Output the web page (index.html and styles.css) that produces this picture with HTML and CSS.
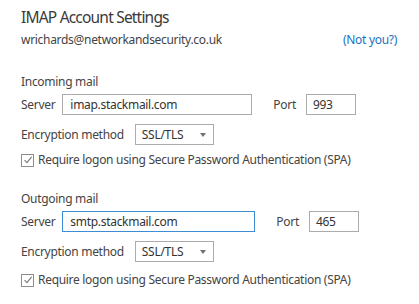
FILE: index.html
```html
<!DOCTYPE html>
<html>
<head>
<meta charset="utf-8">
<link rel="stylesheet" href="styles.css">
</head>
<body>
<div class="page">
  <h1 class="title">IMAP Account Settings</h1>
  <div class="account">
    <span class="email">wrichards@networkandsecurity.co.uk</span>
    <a class="notyou" href="#">(Not you?)</a>
  </div>

  <section class="group group-in">
    <div class="heading">Incoming mail</div>
    <div class="row">
      <span class="label">Server</span>
      <span class="field server">imap.stackmail.com</span>
      <span class="label port-label">Port</span>
      <span class="field port">993</span>
    </div>
    <div class="row enc">
      <span class="label">Encryption method</span>
      <span class="select">SSL/TLS<span class="arrow"></span></span>
    </div>
    <div class="check">
      <span class="box"><svg width="10" height="10" viewBox="0 0 10 10"><path d="M1.5 5.2 L4 7.7 L8.6 1.8" fill="none" stroke="#7a7a7a" stroke-width="1.1"/></svg></span>
      <span class="label">Require logon using Secure Password Authentication (SPA)</span>
    </div>
  </section>

  <section class="group group-out">
    <div class="heading">Outgoing mail</div>
    <div class="row">
      <span class="label">Server</span>
      <span class="field server focus">smtp.stackmail.com</span>
      <span class="label port-label">Port</span>
      <span class="field port">465</span>
    </div>
    <div class="row enc">
      <span class="label">Encryption method</span>
      <span class="select">SSL/TLS<span class="arrow"></span></span>
    </div>
    <div class="check">
      <span class="box"><svg width="10" height="10" viewBox="0 0 10 10"><path d="M1.5 5.2 L4 7.7 L8.6 1.8" fill="none" stroke="#7a7a7a" stroke-width="1.1"/></svg></span>
      <span class="label">Require logon using Secure Password Authentication (SPA)</span>
    </div>
  </section>
</div>
</body>
</html>
```

FILE: styles.css
```css
html, body {
  margin: 0;
  padding: 0;
  background: #ffffff;
}
body {
  font-family: "Noto Sans", "Open Sans", sans-serif;
  color: #444444;
  font-size: 12px;
  letter-spacing: -0.3px;
}
.page {
  padding: 6px 0 0 21px;
  width: 376px;
}
.title {
  margin: 0;
  font-weight: 400;
  font-size: 15.5px;
  letter-spacing: -0.8px;
  line-height: 22px;
  color: #3a3a3a;
}
.account {
  display: flex;
  justify-content: space-between;
  align-items: center;
  margin-top: 4px;
  line-height: 16px;
  height: 16px;
}
.email {
  color: #444444;
}
.notyou {
  color: #1a6fc4;
  text-decoration: none;
}
.group-in {
  margin-top: 26px;
}
.group-out {
  margin-top: 23px;
}
.heading {
  line-height: 16px;
  height: 16px;
}
.row {
  display: flex;
  align-items: center;
  margin-top: 4px;
  height: 21px;
}
.row.enc {
  margin-top: 9px;
}
.label {
  line-height: 16px;
}
.field {
  box-sizing: border-box;
  height: 21px;
  border: 1px solid #ababab;
  padding: 0 7px;
  line-height: 19px;
  color: #333333;
}
.server {
  margin-left: 7px;
  width: 190px;
}
.group-out .server {
  width: 193px;
}
.focus {
  border-color: #3c8cd6;
}
.port-label {
  margin-left: 21px;
}
.port {
  margin-left: 10px;
  width: 50px;
  padding: 0 6px;
}
.select {
  position: relative;
  box-sizing: border-box;
  margin-left: 11px;
  width: 79px;
  height: 21px;
  border: 1px solid #ababab;
  padding: 0 6px;
  line-height: 19px;
  color: #333333;
}
.arrow {
  position: absolute;
  right: 7px;
  top: 8px;
  width: 0;
  height: 0;
  border-left: 3.5px solid transparent;
  border-right: 3.5px solid transparent;
  border-top: 4px solid #707070;
}
.check {
  display: flex;
  align-items: center;
  margin-top: 7px;
  height: 16px;
}
.group-out .check {
  margin-top: 10px;
}
.box {
  box-sizing: border-box;
  width: 13px;
  height: 13px;
  border: 1px solid #8e8e8e;
  display: flex;
  align-items: center;
  justify-content: center;
  margin-right: 4px;
}
.box svg {
  display: block;
}
```
